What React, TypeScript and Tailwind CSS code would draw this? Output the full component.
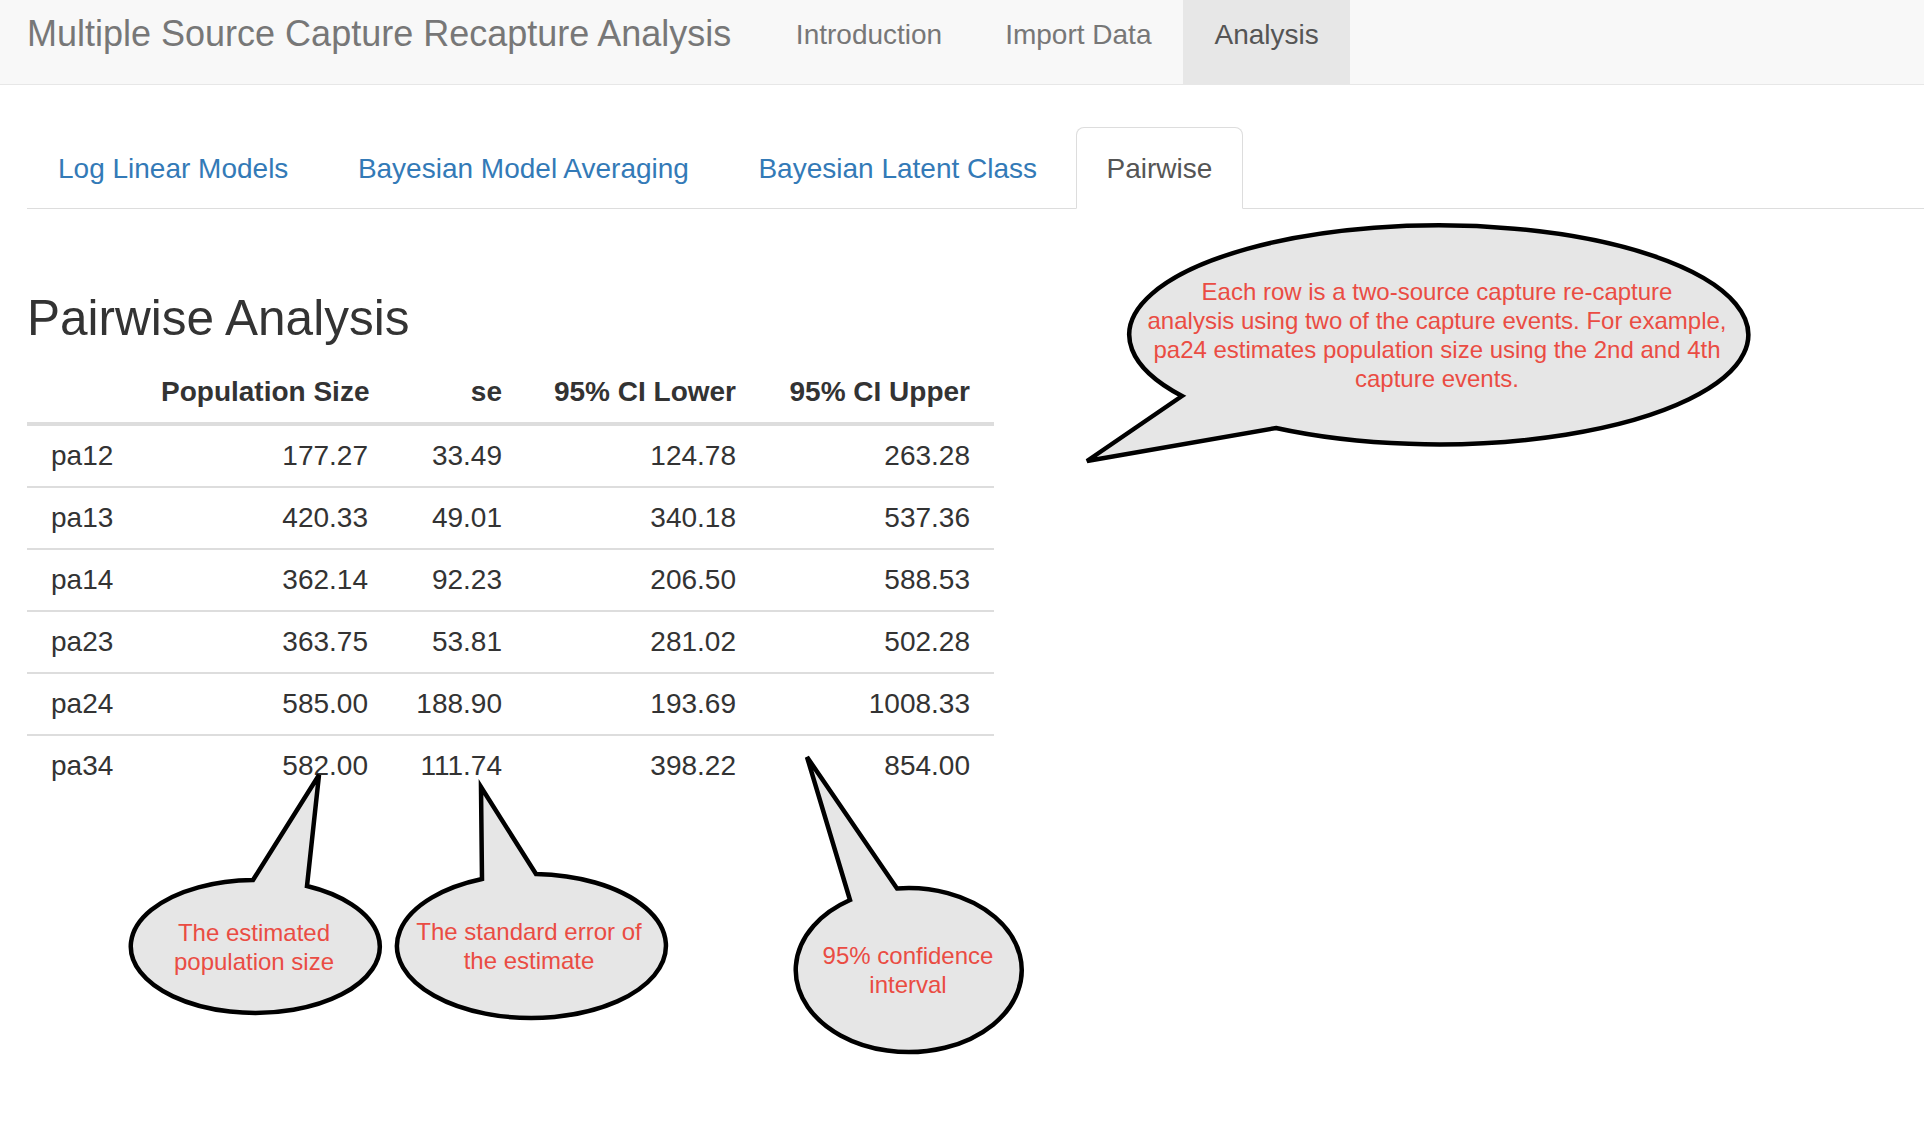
import React from 'react';

const navItems = [
  { id: 'intro', label: 'Introduction' },
  { id: 'import', label: 'Import Data' },
  { id: 'analysis', label: 'Analysis' },
];

const tabs = [
  { id: 'loglinear', label: 'Log Linear Models' },
  { id: 'bma', label: 'Bayesian Model Averaging' },
  { id: 'blc', label: 'Bayesian Latent Class' },
  { id: 'pairwise', label: 'Pairwise' },
];

const rows = [
  ['pa12', '177.27', '33.49', '124.78', '263.28'],
  ['pa13', '420.33', '49.01', '340.18', '537.36'],
  ['pa14', '362.14', '92.23', '206.50', '588.53'],
  ['pa23', '363.75', '53.81', '281.02', '502.28'],
  ['pa24', '585.00', '188.90', '193.69', '1008.33'],
  ['pa34', '582.00', '111.74', '398.22', '854.00'],
];

// speech bubble outlines: tail base left -> tip -> tail base right, then the long arc back
const bubbles = [
  'M1182 396 L1087 461 L1276 428 A309.5 109.5 0 1 0 1182 396 Z',
  'M253 880 L319 775 L307 886 A124.5 66.5 0 1 1 253 880 Z',
  'M482 879 L481 787 L536 874 A134.5 72 0 1 1 482 879 Z',
  'M850 900 L807 757 L897 888.5 A113 82 0 1 1 850 900 Z',
];

function Navbar({ active }: { active: string }) {
  return (
    <nav className="h-[85px] bg-[#f8f8f8] border-b border-[#e7e7e7] flex">
      <div className="pl-[27px] pr-[33px] pt-[14px] text-[36px] leading-[40px] text-[#777] whitespace-nowrap">
        Multiple Source Capture Recapture Analysis
      </div>
      <ul className="flex">
        {navItems.map((item) => {
          const isActive = item.id === active;
          return (
            <li
              key={item.id}
              className={`px-[31.5px] pt-[19px] text-[28px] leading-[32px] whitespace-nowrap ${
                isActive ? 'bg-[#e7e7e7] text-[#555]' : 'text-[#777]'
              }`}
            >
              {item.label}
            </li>
          );
        })}
      </ul>
    </nav>
  );
}

function Tabs({ active }: { active: string }) {
  return (
    <ul className="flex border-b border-[#ddd]">
      {tabs.map((tab) => {
        const isActive = tab.id === active;
        return (
          <li key={tab.id} className="mr-[7.5px] -mb-px">
            <div
              className={`px-[30px] pt-[21px] pb-[19px] text-[28px] leading-[40px] border rounded-t-[8px] whitespace-nowrap ${
                isActive
                  ? 'bg-white border-[#ddd] border-b-transparent text-[#555]'
                  : 'border-transparent text-[#337ab7]'
              }`}
            >
              {tab.label}
            </div>
          </li>
        );
      })}
    </ul>
  );
}

function PairwiseTable() {
  const cell = 'px-[24px] py-[10px] whitespace-nowrap';
  return (
    <table className="w-[967px] table-fixed border-collapse text-[28px] leading-[40px] text-[#333]">
      <colgroup>
        <col className="w-[110px]" />
        <col className="w-[255px]" />
        <col className="w-[134px]" />
        <col className="w-[234px]" />
        <col className="w-[234px]" />
      </colgroup>
      <thead>
        <tr className="border-b-[4px] border-[#ddd]">
          <th className={cell}></th>
          <th className={`${cell} text-right font-bold`}>Population Size</th>
          <th className={`${cell} text-right font-bold`}>se</th>
          <th className={`${cell} text-right font-bold`}>95% CI Lower</th>
          <th className={`${cell} text-right font-bold`}>95% CI Upper</th>
        </tr>
      </thead>
      <tbody>
        {rows.map((r, i) => (
          <tr key={r[0]} className={i > 0 ? 'border-t-2 border-[#ddd]' : ''}>
            <td className={`${cell} text-left`}>{r[0]}</td>
            <td className={`${cell} text-right`}>{r[1]}</td>
            <td className={`${cell} text-right`}>{r[2]}</td>
            <td className={`${cell} text-right`}>{r[3]}</td>
            <td className={`${cell} text-right`}>{r[4]}</td>
          </tr>
        ))}
      </tbody>
    </table>
  );
}

function Callouts() {
  return (
    <div className="absolute inset-0 pointer-events-none">
      <svg className="absolute left-0 top-0" width="1924" height="1146" viewBox="0 0 1924 1146">
        {bubbles.map((d, i) => (
          <path key={i} d={d} fill="#e6e6e6" stroke="#000" strokeWidth="4.5" strokeLinejoin="miter" />
        ))}
      </svg>
      <div className="absolute left-[1087px] top-[277px] w-[700px] text-center text-[24px] leading-[29px] text-[#ea4c43] whitespace-nowrap">
        Each row is a two-source capture re-capture
        <br />
        analysis using two of the capture events. For example,
        <br />
        pa24 estimates population size using the 2nd and 4th
        <br />
        capture events.
      </div>
      <div className="absolute left-[104px] top-[918px] w-[300px] text-center text-[24px] leading-[29px] text-[#ea4c43] whitespace-nowrap">
        The estimated
        <br />
        population size
      </div>
      <div className="absolute left-[379px] top-[917px] w-[300px] text-center text-[24px] leading-[29px] text-[#ea4c43] whitespace-nowrap">
        The standard error of
        <br />
        the estimate
      </div>
      <div className="absolute left-[758px] top-[941px] w-[300px] text-center text-[24px] leading-[29px] text-[#ea4c43] whitespace-nowrap">
        95% confidence
        <br />
        interval
      </div>
    </div>
  );
}

export default function App() {
  return (
    <div className="relative w-[1924px] min-h-[1146px] bg-white overflow-hidden font-['Liberation_Sans',Arial,sans-serif]">
      <Navbar active="analysis" />
      <main className="pl-[27px] pt-[42px]">
        <Tabs active="pairwise" />
        <h3 className="mt-[82px] mb-[18px] text-[49.5px] leading-[53px] font-medium text-[#333]">Pairwise Analysis</h3>
        <PairwiseTable />
      </main>
      <Callouts />
    </div>
  );
}
